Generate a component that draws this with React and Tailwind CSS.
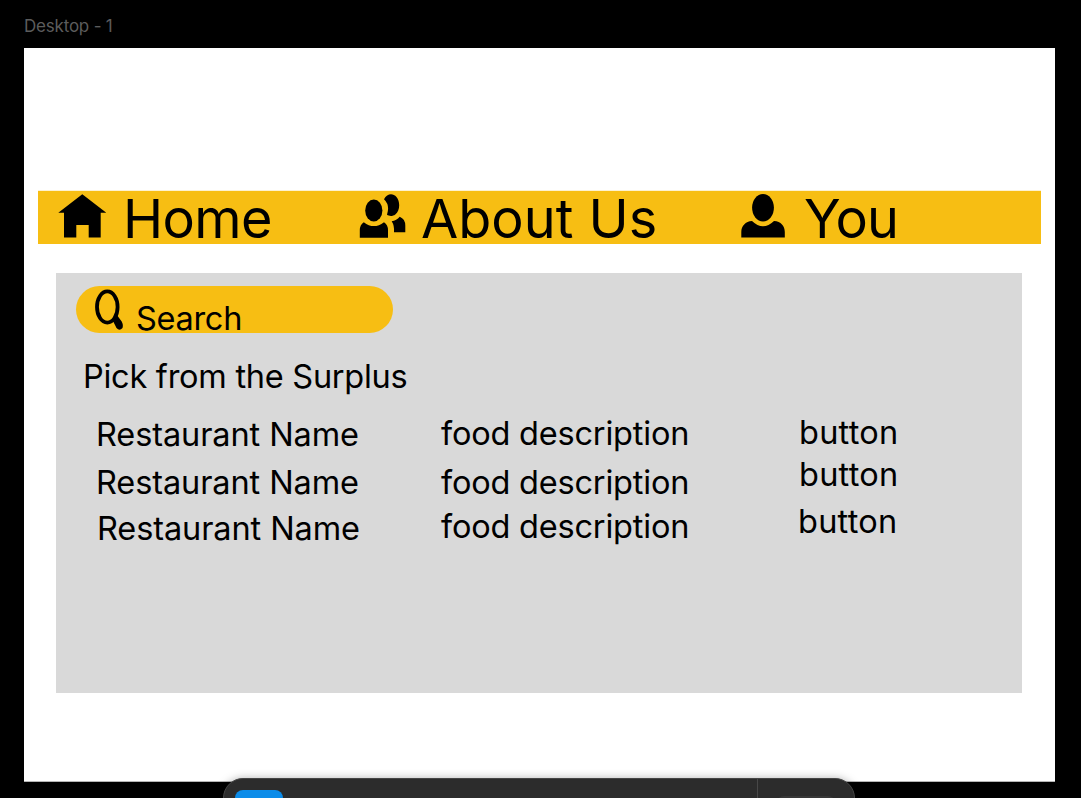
const rows = [
  { id: 1, name: "h-[48px]", food: "h-[49px]", button: "h-[42px]" },
  { id: 2, name: "h-[46px] ", food: "h-[44px]", button: "h-[47px]" },
  { id: 3, name: "h-[40px] pl-px", food: "h-[40px]", button: "h-[40px] -ml-px" },
];

function HomeIcon() {
  return (
    <svg className="ml-5 mt-[3px] h-[45px] w-[50px] shrink-0" viewBox="58 194 50 45">
      <path d="M82.3 194.3 106.3 212.7H100.7V237.5H88.7V225H76.3V237.5H64V212.7H58.3Z" />
    </svg>
  );
}

function PeopleIcon() {
  return (
    <svg className="mt-[3px] h-[45px] w-[48px] shrink-0" viewBox="359 194 48 45">
      <ellipse cx="373.8" cy="210.5" rx="8.6" ry="10.9" />
      <path d="M363.8 222.2Q373.8 230 384 222.2Q388 225 388 230V237.7H359.8V230Q359.8 225 363.8 222.2Z" />
      <path d="M384 199.2C387 193.3 393 192.8 396.5 197C400.5 201.8 400 211 395.3 214.5C392.5 216.6 389 216.2 387 214.8Q390.2 205 384 199.2Z" />
      <path d="M391.7 221.2Q396.5 220.5 399.7 216.7Q405.3 219 405.3 225.5V232.2H394Q394.5 225.500 391.7 221.2Z" />
    </svg>
  );
}

function PersonIcon() {
  return (
    <svg className="mt-[3px] h-[45px] w-[46px] shrink-0" viewBox="740 194 46 45">
      <ellipse cx="763" cy="207.8" rx="10.9" ry="13.7" />
      <path d="M752 221Q763 231.5 774 221C781 221.5 784.8 226 784.8 232V237.5H741.3V232C741.3 226 745.5 221.5 752 221Z" />
    </svg>
  );
}

function SearchIcon() {
  return (
    <svg className="ml-[18px] mt-[3px] h-[42px] w-[30px] shrink-0" viewBox="94 289 30 42">
      <ellipse cx="107.3" cy="307" rx="10.3" ry="15.6" fill="none" stroke="#000" strokeWidth="3.8" />
      <path d="M111 321.5 117 314.5 118 316.500 121.7 321.500Q123.500 325 122.500 328Q119.500 331.500 116.500 328L113.500 322Z" />
    </svg>
  );
}

export default function App() {
  return (
    <main className="relative h-[798px] w-[1081px] overflow-hidden bg-black pl-6 font-['Inter',sans-serif] text-black">
      <div className="h-[48px] pt-[14px] text-[17px] leading-6 tracking-[-0.2px] text-[#5c5c5c]">Desktop - 1</div>
      <section className="h-[734px] w-[1031px] border-b border-[#b5b5b5] bg-white pt-[142px]">
        <nav className="ml-[14px] flex h-[54px] w-[1003px] whitespace-nowrap border-t border-[#fdf2d0] bg-[#f7be13] text-[54px] leading-[55px]">
          <div className="flex w-[321px]">
            <HomeIcon />
            <span className="ml-[15px] tracking-[-0.6px]">Home</span>
          </div>
          <div className="flex w-[381px]">
            <PeopleIcon />
            <span className="ml-[14px]">About Us</span>
          </div>
          <div className="flex">
            <PersonIcon />
            <span className="ml-[18px] tracking-[-1px]">You</span>
          </div>
        </nav>
        <div className="ml-8 mt-[29px] h-[420px] w-[966px] whitespace-nowrap bg-[#d9d9d9] pt-[13px] text-[32.5px] leading-[40px]">
          <div className="ml-5 flex h-[47px] w-[317px] rounded-full bg-[#f7be13]">
            <SearchIcon />
            <span className="ml-3 mt-[13px] tracking-[-0.3px]">Search</span>
          </div>
          <h1 className="ml-[27px] mt-[24px] h-[40px] tracking-[-0.26px]">Pick from the Surplus</h1>
          <div className="ml-10 mt-[16px] flex">
            <div className="w-[345px] pt-[2px] tracking-[-0.1px]">
              {rows.map((row) => <div key={row.id} className={row.name}>Restaurant Name</div>)}
            </div>
            <div className="w-[358px] pt-px tracking-[-0.2px]">
              {rows.map((row) => <div key={row.id} className={row.food}>food description</div>)}
            </div>
            <div className="tracking-[0.25px]">
              {rows.map((row) => <div key={row.id} className={row.button}>button</div>)}
            </div>
          </div>
        </div>
      </section>
      <div className="absolute left-[223px] top-[778px] flex h-[60px] w-[632px] rounded-[20px] border border-[#464646] bg-[#2c2c2c] pl-[11px] pt-[11px] shadow-[0_1px_10px_rgba(0,0,0,0.35)]">
        <div className="h-12 w-12 rounded-lg bg-[#0c8ce9]" />
        <div className="-mt-[11px] ml-[474px] h-[58px] w-px bg-[#484848]" />
        <div className="ml-[18px] mt-[6px] h-10 w-[60px] rounded-lg bg-[#383838]" />
      </div>
    </main>
  );
}
